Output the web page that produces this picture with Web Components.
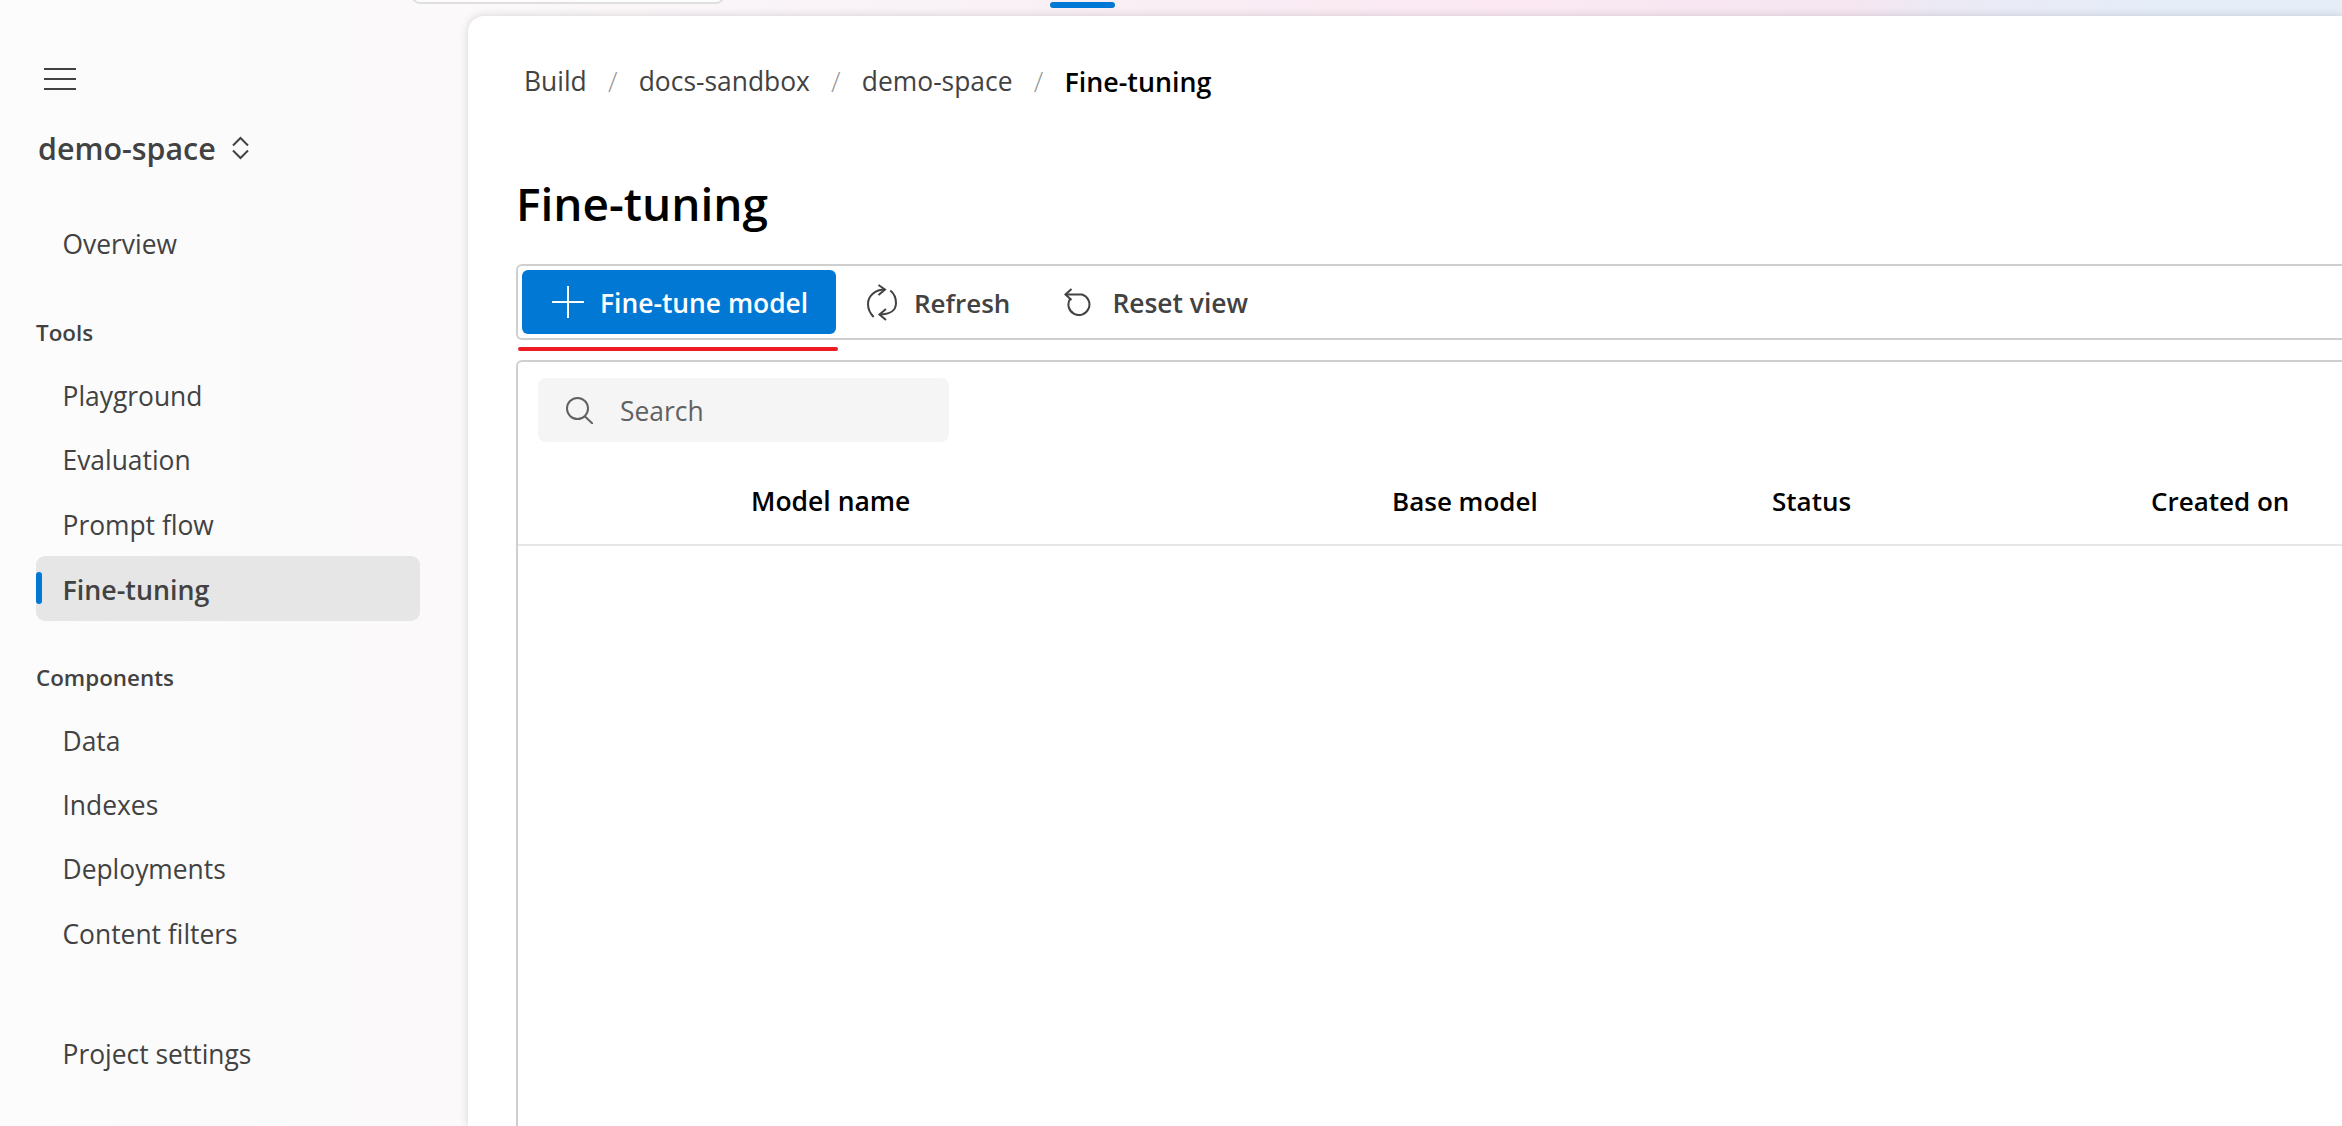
<!doctype html>
<html>
<head>
<meta charset="utf-8">
<title>Fine-tuning</title>
<style>
  html, body { margin: 0; height: 100%; overflow: hidden; }
  body {
    font-family: "Open Sans", "Noto Sans", sans-serif;
    background: linear-gradient(90deg, #fcfcfc 0, #fbf9fa 468px, #f9f1f6 1000px, #fbe8f2 1500px, #f5e6f1 1850px, #ebeaf5 1950px, #e5edf8 2150px);
  }
</style>
</head>
<body>
<app-shell>
  <side-nav slot="nav"></side-nav>
  <main-panel slot="main"></main-panel>
</app-shell>

<script>
const ICONS = {
  menu: '<svg width="32" height="22" viewBox="0 0 32 22" fill="none" stroke="#424242" stroke-width="2"><path d="M0 1h32M0 11h32M0 21h32"/></svg>',
  updown: '<svg width="17" height="24" viewBox="0 0 17 24" fill="none" stroke="#424242" stroke-width="2"><path d="M1 9.5 8.500 2 16 9.500M1 14.500 8.500 22 16 14.500"/></svg>',
  plus: '<svg width="32" height="32" viewBox="0 0 32 32" fill="none" stroke="#fff" stroke-width="2"><path d="M0 16h32M16 0v32"/></svg>',
  refresh: '<svg width="30" height="37" viewBox="0 0 30 37" fill="none" stroke="#424242" stroke-width="2"><path d="M18 5.500C8 5.500 1 12 1 20c0 5 2.200 9.500 5.700 13M12.500 30.500C22 30.500 29 27 29 19c0-5-2-9.500-5.700-12.500"/><path d="M11.500 1 18 5.500 11.500 11M19 25l-6.500 5.500L19 36"/></svg>',
  reset: '<svg width="32" height="28" viewBox="0 0 32 28" fill="none" stroke="#424242" stroke-width="2"><path d="M1.500 6.500H18a10.500 10.500 0 1 1-12 4.500"/><path d="M7.500 1 1.500 6.500l6 5.500"/></svg>',
  search: '<svg width="27" height="27" viewBox="0 0 27 27" fill="none" stroke="#616161" stroke-width="2"><circle cx="11.500" cy="11.500" r="10.500"/><path d="M18.500 19 27 27"/></svg>'
};

class AppShell extends HTMLElement {
  constructor() {
    super();
    this.attachShadow({ mode: 'open' }).innerHTML = `
<style>
  :host { display: flex; height: 1126px; position: relative; }
  .pill {
    position: absolute; left: 411px; top: -14px; width: 314px; height: 18px;
    border: 2px solid #dfdfdf; border-radius: 16px; background: #fdfdfd; box-sizing: border-box;
  }
  .tab {
    position: absolute; left: 1050px; top: 2px; width: 65px; height: 6px;
    background: #0078d4; border-radius: 3px;
  }
  .nav { flex: 0 0 468px; }
  .main { flex: 1; min-width: 0; padding-top: 16px; display: flex; }
</style>
<div class="pill"></div>
<div class="tab"></div>
<div class="nav"><slot name="nav"></slot></div>
<div class="main"><slot name="main"></slot></div>`;
  }
}

class NavItem extends HTMLElement {
  constructor() {
    super();
    this.attachShadow({ mode: 'open' }).innerHTML = `
<style>
  :host { display: block; margin-left: 36px; width: 384px; font-size: 26.400px; color: #424242; }
  .row {
    height: 64.200px; display: flex; align-items: center; padding: 2px 0 0 26.500px;
    border-radius: 9px; position: relative; box-sizing: border-box;
  }
  :host([active]) .row { height: 65px; margin-bottom: -0.800px; background: #e6e6e6; font-weight: 600; font-size: 26.800px; }
  :host([active]) .row::before {
    content: ""; position: absolute; left: 0; top: 16px; width: 6px; height: 32px;
    background: #0078d4; border-radius: 3px;
  }
</style>
<div class="row"><slot></slot></div>`;
  }
}

class NavHeading extends HTMLElement {
  constructor() {
    super();
    this.attachShadow({ mode: 'open' }).innerHTML = `
<style>
  :host { display: block; margin-left: 36px; font-size: 22.400px; font-weight: 600; color: #424242; line-height: 30px; }
</style>
<slot></slot>`;
  }
}

class SideNav extends HTMLElement {
  constructor() {
    super();
    this.attachShadow({ mode: 'open' }).innerHTML = `
<style>
  :host { display: flex; flex-direction: column; height: 100%; }
  .menu { margin: 68px 0 0 44px; height: 22px; display: flex; }
  .space {
    margin: 40px 0 0 38px; height: 36px; display: flex; align-items: center; gap: 16px;
    font-size: 30.400px; font-weight: 600; color: #424242;
  }
  .overview { margin-top: 45px; }
  .h1 { margin-top: 43px; margin-bottom: 15px; }
  .h2 { margin-top: 43px; margin-bottom: 15px; }
  .settings { margin-top: 56px; }
</style>
<div class="menu">${ICONS.menu}</div>
<div class="space"><span>demo-space</span>${ICONS.updown}</div>
<nav-item class="overview">Overview</nav-item>
<nav-heading class="h1">Tools</nav-heading>
<nav-item>Playground</nav-item>
<nav-item>Evaluation</nav-item>
<nav-item>Prompt flow</nav-item>
<nav-item active>Fine-tuning</nav-item>
<nav-heading class="h2">Components</nav-heading>
<nav-item>Data</nav-item>
<nav-item>Indexes</nav-item>
<nav-item>Deployments</nav-item>
<nav-item>Content filters</nav-item>
<nav-item class="settings">Project settings</nav-item>`;
  }
}

class ToolButton extends HTMLElement {
  constructor() {
    super();
    this.attachShadow({ mode: 'open' }).innerHTML = `
<style>
  :host { display: inline-flex; align-items: center; height: 64px; font-size: 26.400px; font-weight: 600; color: #424242; box-sizing: border-box; }
  :host([primary]) { background: #0078d4; color: #fff; border-radius: 6px; }
  ::slotted(span) { display: flex; flex: none; }
  .label { padding-top: 2px; }
</style>
<slot name="icon"></slot><span class="label"><slot></slot></span>`;
  }
}

class MainPanel extends HTMLElement {
  constructor() {
    super();
    this.attachShadow({ mode: 'open' }).innerHTML = `
<style>
  :host {
    display: block; flex: 1; background: #fff; border-radius: 16px 0 0 0; min-width: 0;
    box-shadow: 0 0 8px rgba(0,0,0,.16); padding: 47px 0 0 48px; box-sizing: border-box; overflow: hidden;
  }
  .crumbs { display: flex; align-items: center; height: 36px; margin-left: 8px; font-size: 26.400px; color: #424242; }
  .crumbs i { font-style: normal; font-weight: 300; color: #9a9a9a; width: 52px; text-align: center; font-size: 28px; }
  .crumbs b { font-weight: 600; color: #000; font-size: 26.800px; }
  h1 { margin: 72px 0 0; height: 64px; line-height: 64px; font-size: 46px; font-weight: 600; color: #000; }
  .bar {
    margin-top: 29px; height: 76px; box-sizing: border-box; padding: 4px 0 0 4px;
    border: 2px solid #cfcfcf; border-right: 0; border-radius: 6px 0 0 6px; display: flex;
  }
  .underline { height: 4px; width: 320px; margin: 7px 0 0 1.500px; background: #ed1c24; border-radius: 2px; }
  .table {
    margin-top: 9px; height: 900px; box-sizing: border-box;
    border: 2px solid #cfcfcf; border-width: 2px 0 0 2px; border-radius: 6px 0 0 0;
  }
  .search {
    margin: 16px 0 0 20px; width: 411px; height: 64px; background: #f5f5f5; border-radius: 8px;
    display: flex; align-items: center; gap: 27px; padding-left: 28px; box-sizing: border-box;
    font-size: 26.400px; color: #616161;
  }
  .search svg { flex: none; }
  .search span { padding-top: 2px; }
  .head {
    margin-top: 16px; height: 88px; border-bottom: 2px solid #e6e6e6; box-sizing: border-box;
    display: grid; grid-template-columns: 233px 641px 380px 379px auto; align-items: center;
    font-size: 26px; font-weight: 600; color: #000;
  }
  .head .wide { font-size: 26.500px; }
</style>
<div class="crumbs"><span>Build</span><i>/</i><span>docs-sandbox</span><i>/</i><span>demo-space</span><i>/</i><b>Fine-tuning</b></div>
<h1>Fine-tuning</h1>
<div class="bar">
  <tool-button primary style="width:314px;padding-left:30px;gap:16px"><span slot="icon">${ICONS.plus}</span>Fine-tune model</tool-button>
  <tool-button style="margin-left:31px;gap:17px;font-size:26px"><span slot="icon">${ICONS.refresh}</span>Refresh</tool-button>
  <tool-button style="margin-left:54px;gap:16px"><span slot="icon">${ICONS.reset}</span>Reset view</tool-button>
</div>
<div class="underline"></div>
<div class="table">
  <div class="search">${ICONS.search}<span>Search</span></div>
  <div class="head"><span></span><span class="wide">Model name</span><span>Base model</span><span>Status</span><span>Created on</span></div>
</div>`;
  }
}

customElements.define('app-shell', AppShell);
customElements.define('nav-item', NavItem);
customElements.define('nav-heading', NavHeading);
customElements.define('side-nav', SideNav);
customElements.define('tool-button', ToolButton);
customElements.define('main-panel', MainPanel);
</script>
</body>
</html>
